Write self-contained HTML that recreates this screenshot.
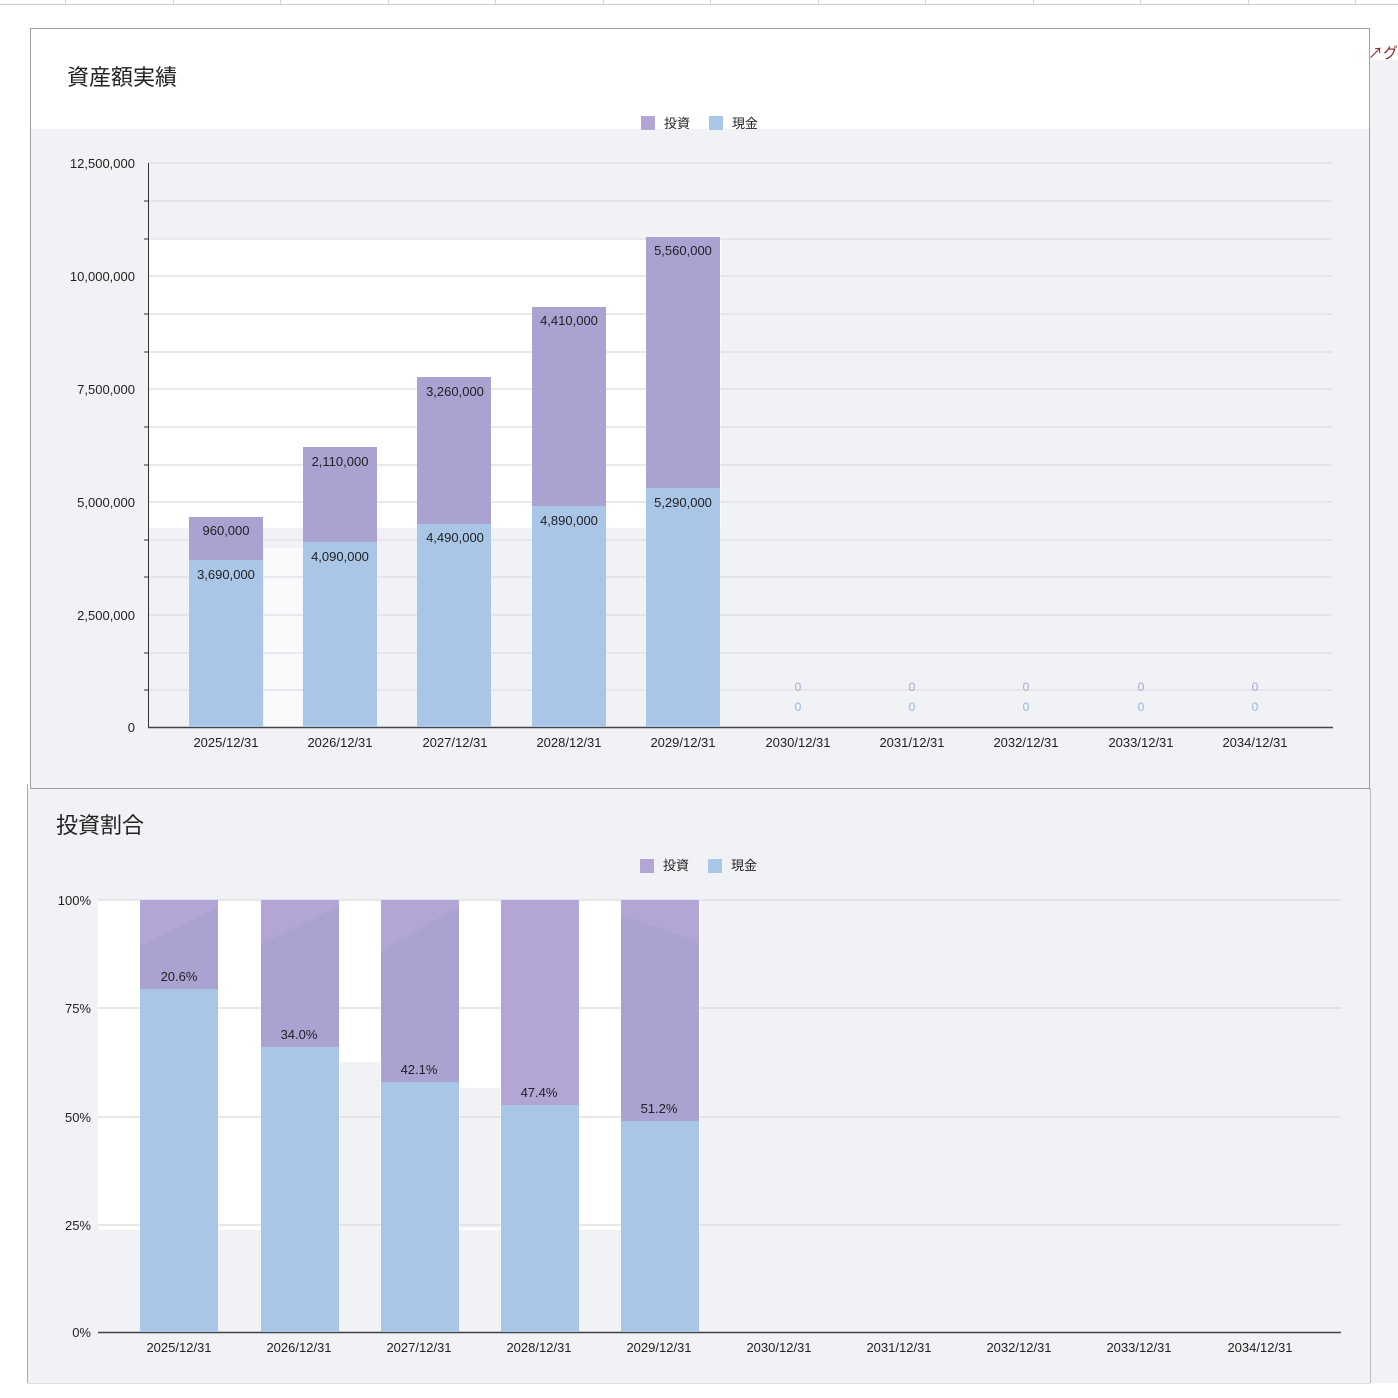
<!DOCTYPE html>
<html><head><meta charset="utf-8"><style>
body{margin:0;width:1398px;height:1398px;background:#fff;overflow:hidden;font-family:"Liberation Sans","Noto Sans CJK JP",sans-serif;}
svg{position:absolute;left:0;top:0}
</style></head><body>
<svg width="1398" height="1398" viewBox="0 0 1398 1398" font-family="Liberation Sans, Noto Sans CJK JP, sans-serif">
<!-- top sheet grid -->
<line x1="0" y1="4.5" x2="1398" y2="4.5" stroke="#cfcfcf"/>
<g stroke="#d6d6d6">
<line x1="65.5" y1="0" x2="65.5" y2="4"/><line x1="173.5" y1="0" x2="173.5" y2="4"/><line x1="280.5" y1="0" x2="280.5" y2="4"/><line x1="388.5" y1="0" x2="388.5" y2="4"/><line x1="495.5" y1="0" x2="495.5" y2="4"/><line x1="603.5" y1="0" x2="603.5" y2="4"/><line x1="710.5" y1="0" x2="710.5" y2="4"/><line x1="818.5" y1="0" x2="818.5" y2="4"/><line x1="925.5" y1="0" x2="925.5" y2="4"/><line x1="1033.5" y1="0" x2="1033.5" y2="4"/><line x1="1140.5" y1="0" x2="1140.5" y2="4"/><line x1="1248.5" y1="0" x2="1248.5" y2="4"/><line x1="1355.5" y1="0" x2="1355.5" y2="4"/>
</g>
<!-- right strip -->
<rect x="1370" y="60" width="28" height="1323" fill="#f1f2f6"/>
<text x="1368" y="58" font-size="15" fill="#8b2a2a">↗グラ</text>

<!-- chart 1 -->
<rect x="31" y="129" width="1338" height="659" fill="#f1f2f6"/>
<rect x="30.5" y="28.5" width="1339" height="760" fill="none" stroke="#9e9e9e"/>
<text x="67" y="85" font-size="22" fill="#222">資産額実績</text>
<rect x="641" y="116" width="14" height="14" fill="#b3a5d6"/><text x="664" y="128" font-size="13" fill="#222">投資</text>
<rect x="709" y="116" width="14" height="14" fill="#a8c8e8"/><text x="732" y="128" font-size="13" fill="#222">現金</text>
<rect x="149" y="238" width="572" height="290" fill="#fff"/>
<rect x="264" y="548" width="40" height="180" fill="#fafafc"/>
<g stroke="#e2e2e6" stroke-width="1.5">
<line x1="148" y1="163" x2="1332" y2="163"/><line x1="148" y1="201" x2="1332" y2="201"/><line x1="148" y1="239" x2="1332" y2="239"/><line x1="148" y1="276" x2="1332" y2="276"/><line x1="148" y1="314" x2="1332" y2="314"/><line x1="148" y1="352" x2="1332" y2="352"/><line x1="148" y1="389" x2="1332" y2="389"/><line x1="148" y1="427" x2="1332" y2="427"/><line x1="148" y1="465" x2="1332" y2="465"/><line x1="148" y1="502" x2="1332" y2="502"/><line x1="148" y1="540" x2="1332" y2="540"/><line x1="148" y1="577" x2="1332" y2="577"/><line x1="148" y1="615" x2="1332" y2="615"/><line x1="148" y1="653" x2="1332" y2="653"/><line x1="148" y1="690" x2="1332" y2="690"/>
</g>
<line x1="148.5" y1="163" x2="148.5" y2="728" stroke="#333"/>
<g stroke="#333"><line x1="144" y1="201" x2="148" y2="201"/><line x1="144" y1="239" x2="148" y2="239"/><line x1="144" y1="314" x2="148" y2="314"/><line x1="144" y1="352" x2="148" y2="352"/><line x1="144" y1="427" x2="148" y2="427"/><line x1="144" y1="465" x2="148" y2="465"/><line x1="144" y1="540" x2="148" y2="540"/><line x1="144" y1="577" x2="148" y2="577"/><line x1="144" y1="653" x2="148" y2="653"/><line x1="144" y1="690" x2="148" y2="690"/></g>
<line x1="148" y1="727.5" x2="1333" y2="727.5" stroke="#444" stroke-width="1.5"/>
<g font-size="13" fill="#222" text-anchor="end">
<text x="135" y="168">12,500,000</text><text x="135" y="281">10,000,000</text><text x="135" y="394">7,500,000</text><text x="135" y="507">5,000,000</text><text x="135" y="620">2,500,000</text><text x="135" y="732">0</text>
</g>
<g>
<rect x="189" y="517" width="74" height="44" fill="#aaa3d2"/><rect x="189" y="560" width="74" height="167" fill="#a9c6e6"/>
<rect x="303" y="447" width="74" height="96" fill="#aaa3d2"/><rect x="303" y="542" width="74" height="185" fill="#a9c6e6"/>
<rect x="417" y="377" width="74" height="148" fill="#aaa3d2"/><rect x="417" y="524" width="74" height="203" fill="#a9c6e6"/>
<rect x="532" y="307" width="74" height="200" fill="#aaa3d2"/><rect x="532" y="506" width="74" height="221" fill="#a9c6e6"/>
<rect x="646" y="237" width="74" height="252" fill="#aaa3d2"/><rect x="646" y="488" width="74" height="239" fill="#a9c6e6"/>
</g>
<g font-size="13" fill="#222" text-anchor="middle">
<text x="226" y="535">960,000</text><text x="226" y="579">3,690,000</text>
<text x="340" y="466">2,110,000</text><text x="340" y="561">4,090,000</text>
<text x="455" y="396">3,260,000</text><text x="455" y="542">4,490,000</text>
<text x="569" y="325">4,410,000</text><text x="569" y="525">4,890,000</text>
<text x="683" y="255">5,560,000</text><text x="683" y="507">5,290,000</text>
</g>
<g font-size="12" text-anchor="middle">
<g fill="#aaa3d2"><text x="798" y="691">0</text><text x="912" y="691">0</text><text x="1026" y="691">0</text><text x="1141" y="691">0</text><text x="1255" y="691">0</text></g>
<g fill="#8fb9e6"><text x="798" y="711">0</text><text x="912" y="711">0</text><text x="1026" y="711">0</text><text x="1141" y="711">0</text><text x="1255" y="711">0</text></g>
</g>
<g font-size="13" fill="#222" text-anchor="middle">
<text x="226" y="747">2025/12/31</text><text x="340" y="747">2026/12/31</text><text x="455" y="747">2027/12/31</text><text x="569" y="747">2028/12/31</text><text x="683" y="747">2029/12/31</text><text x="798" y="747">2030/12/31</text><text x="912" y="747">2031/12/31</text><text x="1026" y="747">2032/12/31</text><text x="1141" y="747">2033/12/31</text><text x="1255" y="747">2034/12/31</text>
</g>

<!-- chart 2 -->
<rect x="28" y="789" width="1342" height="594" fill="#f1f2f6"/>
<line x1="27.5" y1="784" x2="27.5" y2="1383" stroke="#aaa"/>
<line x1="1370.5" y1="788" x2="1370.5" y2="1383" stroke="#bbb"/>
<line x1="28" y1="1383.5" x2="1370" y2="1383.5" stroke="#ddd"/>
<text x="56" y="833" font-size="22" fill="#222">投資割合</text>
<rect x="640" y="859" width="14" height="14" fill="#b3a5d6"/><text x="663" y="870" font-size="13" fill="#222">投資</text>
<rect x="708" y="859" width="14" height="14" fill="#a8c8e8"/><text x="731" y="870" font-size="13" fill="#222">現金</text>
<rect x="98" y="900" width="602" height="330" fill="#fff"/>
<rect x="340" y="1062" width="40" height="170" fill="#f1f2f6"/><rect x="460" y="1088" width="40" height="140" fill="#f1f2f6"/>
<g stroke="#e0e0e4" stroke-width="1.5">
<line x1="98" y1="900" x2="1341" y2="900"/><line x1="98" y1="1008" x2="1341" y2="1008"/><line x1="98" y1="1117" x2="1341" y2="1117"/><line x1="98" y1="1225" x2="1341" y2="1225"/>
</g>
<line x1="98" y1="1332.5" x2="1341" y2="1332.5" stroke="#444" stroke-width="1.5"/>
<g font-size="13" fill="#222" text-anchor="end">
<text x="91" y="905">100%</text><text x="91" y="1013">75%</text><text x="91" y="1122">50%</text><text x="91" y="1230">25%</text><text x="91" y="1337">0%</text>
</g>
<g>
<rect x="140" y="900" width="78" height="90" fill="#aaa3d2"/><polygon points="140,900 218,900 218,907 140,946" fill="#b3a5d6"/><rect x="140" y="989" width="78" height="343" fill="#a9c6e6"/>
<rect x="261" y="900" width="78" height="148" fill="#aaa3d2"/><polygon points="261,900 339,900 339,906 261,944" fill="#b3a5d6"/><rect x="261" y="1047" width="78" height="285" fill="#a9c6e6"/>
<rect x="381" y="900" width="78" height="183" fill="#aaa3d2"/><polygon points="381,900 459,900 459,906 381,952" fill="#b3a5d6"/><rect x="381" y="1082" width="78" height="250" fill="#a9c6e6"/>
<rect x="501" y="900" width="78" height="206" fill="#b3a5d6"/><rect x="501" y="1105" width="78" height="227" fill="#a9c6e6"/>
<rect x="621" y="900" width="78" height="222" fill="#aaa3d2"/><polygon points="621,900 699,900 699,942 621,915" fill="#b3a5d6"/><rect x="621" y="1121" width="78" height="211" fill="#a9c6e6"/>
</g>
<g font-size="13" fill="#222" text-anchor="middle">
<text x="179" y="981">20.6%</text><text x="299" y="1039">34.0%</text><text x="419" y="1074">42.1%</text><text x="539" y="1097">47.4%</text><text x="659" y="1113">51.2%</text>
</g>
<g font-size="13" fill="#222" text-anchor="middle">
<text x="179" y="1352">2025/12/31</text><text x="299" y="1352">2026/12/31</text><text x="419" y="1352">2027/12/31</text><text x="539" y="1352">2028/12/31</text><text x="659" y="1352">2029/12/31</text><text x="779" y="1352">2030/12/31</text><text x="899" y="1352">2031/12/31</text><text x="1019" y="1352">2032/12/31</text><text x="1139" y="1352">2033/12/31</text><text x="1260" y="1352">2034/12/31</text>
</g>
</svg>
</body></html>
